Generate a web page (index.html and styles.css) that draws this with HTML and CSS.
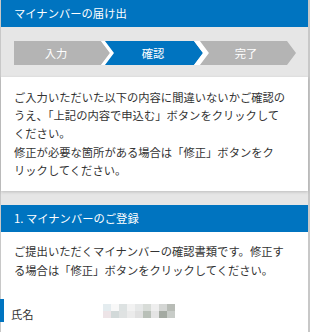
FILE: index.html
```html
<!DOCTYPE html>
<html lang="ja">
<head>
  <meta charset="UTF-8" />
  <meta name="viewport" content="width=device-width, initial-scale=1.0" />
  <title>マイナンバーの届け出</title>
  <link rel="stylesheet" href="styles.css">
</head>
<body>
  <div class="page">
    <!-- Title -->
    <div class="bar">マイナンバーの届け出</div>

    <!-- Steps -->
    <div class="steps">
      <svg class="steps-svg" width="282" height="24" viewBox="0 0 282 24">
        <polygon class="step-off" points="0,0 87,0 96,12 87,24 0,24" />
        <polygon class="step-gap" points="87,0 91,0 100,12 91,24 87,24 96,12" />
        <polygon class="step-on" points="91,0 180,0 189,12 180,24 91,24 100,12" />
        <polygon class="step-gap" points="180,0 186,0 195,12 186,24 180,24 189,12" />
        <polygon class="step-off" points="186,0 273,0 282,12 273,24 186,24 195,12" />
        <text class="step-label" x="42" y="16.5">入力</text>
        <text class="step-label" x="139" y="16.5">確認</text>
        <text class="step-label" x="232" y="16.5">完了</text>
      </svg>
    </div>

    <!-- Notice -->
    <div class="card">
      <p>ご入力いただいた以下の内容に間違いないかご確認のうえ、「上記の内容で申込む」ボタンをクリックしてください。<br>修正が必要な箇所がある場合は「修正」ボタンをクリックしてください。</p>
    </div>

    <div class="spacer"></div>

    <!-- Section 1 -->
    <div class="bar">1. マイナンバーのご登録</div>
    <div class="section">
      <p>ご提出いただくマイナンバーの確認書類です。修正する場合は「修正」ボタンをクリックしてください。</p>
      <div class="field">
        <span class="field-label">氏名</span>
        <span class="mosaic">
          <i></i><i></i><i></i><i></i><i></i><i></i><i></i><i></i><i></i>
          <i></i><i></i><i></i><i></i><i></i><i></i><i></i><i></i><i></i>
        </span>
      </div>
    </div>
  </div>
</body>
</html>
```
FILE: styles.css
```css
* {
  box-sizing: border-box;
}
body {
  margin: 0;
  background: #fff;
  font-family: "Noto Sans CJK JP", "Noto Sans", sans-serif;
  color: #333;
  overflow: hidden;
}

p {
  margin: 0;
  line-break: strict;
}

.page {
  width: 310px;
  min-height: 332px;
  border-left: 1px solid #c8c8c8;
  border-right: 2px solid #c8c8c8;
  background: #fff;
}

.bar {
  height: 27px;
  line-height: 27px;
  padding-left: 13px;
  background: #0074c0;
  color: #fff;
  font-size: 11.3px;
}

.steps {
  background: #e6e6e6;
  padding: 14px 13px 12px;
  line-height: 0;
}

.step-off { fill: #b4b4b4; }
.step-on { fill: #0074c0; }
.step-gap { fill: #fff; }

.step-label {
  fill: #fff;
  font-size: 11.3px;
  font-family: "Noto Sans CJK JP", sans-serif;
  text-anchor: middle;
}

.card {
  background: #fff;
  padding: 11px 18px 12px 13px;
  font-size: 11.3px;
  line-height: 18.2px;
  box-shadow: 0 1px 3px rgba(0, 0, 0, 0.18);
  position: relative;
}

.spacer {
  height: 14px;
  background: #e6e6e6;
}

.section {
  padding: 10px 18px 0 13px;
  font-size: 11.3px;
  line-height: 19px;
}

.field {
  display: flex;
  align-items: flex-end;
  margin: 19px -18px 0 -14px;
  height: 23px;
  border-left: 4px solid #0074c0;
  padding-left: 7px;
}

.field-label {
  width: 92px;
  line-height: 15px;
}

.mosaic {
  display: grid;
  grid-template-columns: repeat(9, 8px);
  grid-auto-rows: 7px;
  align-self: flex-start;
  margin-top: 5px;
}

.mosaic i { background: #e8e8e8; }
.mosaic i:nth-child(1) { background: #e4ecef; }
.mosaic i:nth-child(2) { background: #f8f8f8; }
.mosaic i:nth-child(3) { background: #dde2e2; }
.mosaic i:nth-child(4) { background: #f2f2f2; }
.mosaic i:nth-child(5) { background: #e6e8e8; }
.mosaic i:nth-child(6) { background: #d8dcd8; }
.mosaic i:nth-child(7) { background: #eeeeee; }
.mosaic i:nth-child(8) { background: #d4d6d4; }
.mosaic i:nth-child(9) { background: #b8bcb6; }
.mosaic i:nth-child(10) { background: #ede4e7; }
.mosaic i:nth-child(11) { background: #d2d9d9; }
.mosaic i:nth-child(12) { background: #dfe2e2; }
.mosaic i:nth-child(13) { background: #ebebeb; }
.mosaic i:nth-child(14) { background: #e0e0e0; }
.mosaic i:nth-child(15) { background: #b9c0b8; }
.mosaic i:nth-child(16) { background: #e4e4e4; }
.mosaic i:nth-child(17) { background: #a4aaa2; }
.mosaic i:nth-child(18) { background: #c8ccc8; }
```
